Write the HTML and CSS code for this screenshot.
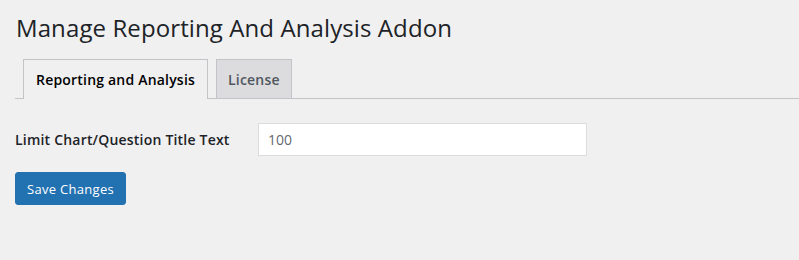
FILE: index.html
```html
<html>
<head>
<link rel="stylesheet" href="styles.css">
</head>
<body>
<div class="wrap">
  <h1 class="page-title">Manage Reporting And Analysis Addon</h1>
  <nav class="nav-tab-wrapper">
    <a class="nav-tab nav-tab-active" href="#">Reporting and Analysis</a>
    <a class="nav-tab" href="#">License</a>
  </nav>
  <form class="settings">
    <div class="form-row">
      <label class="field-label" for="limit-title">Limit Chart/Question Title Text</label>
      <input class="regular-text" id="limit-title" type="text" value="100">
    </div>
    <button class="button-primary" type="button">Save Changes</button>
  </form>
</div>
</body>
</html>
```

FILE: styles.css
```css
* {
  box-sizing: border-box;
  margin: 0;
  padding: 0;
}

body {
  background: #f0f0f1;
  color: #1d2327;
  font-family: "Open Sans", "Noto Sans", sans-serif;
  font-size: 13px;
}

.wrap {
  padding: 0 0 0 15px;
}

.page-title {
  font-size: 24px;
  font-weight: 400;
  line-height: 30px;
  letter-spacing: 0.1px;
  padding: 13px 0 0 1px;
  color: #1d2327;
}

.nav-tab-wrapper {
  display: flex;
  gap: 8px;
  margin-top: 16px;
  padding-left: 8px;
  border-bottom: 1px solid #c3c4c7;
}

.nav-tab {
  display: block;
  height: 39px;
  padding: 0 12px;
  line-height: 40px;
  font-size: 14px;
  font-weight: 600;
  letter-spacing: 0.2px;
  color: #50575e;
  text-decoration: none;
  background: #dcdcde;
  border: 1px solid #c3c4c7;
  border-bottom: none;
  margin-bottom: -1px;
}

.nav-tab + .nav-tab {
  padding: 0 11px;
}

.nav-tab-active {
  background: #f0f0f1;
  color: #000;
  height: 40px;
}

.settings {
  padding-top: 24px;
}

.form-row {
  display: grid;
  grid-template-columns: 243px 329px;
  align-items: center;
}

.field-label {
  font-size: 14px;
  font-weight: 600;
  letter-spacing: 0.2px;
  color: #1d2327;
}

.regular-text {
  height: 33px;
  padding: 0 9px;
  font-family: inherit;
  font-size: 14px;
  color: #646970;
  background: #fff;
  border: 1px solid #dcdcde;
  outline: none;
}

.button-primary {
  margin-top: 16px;
  height: 33px;
  padding: 0 11px;
  font-family: inherit;
  font-size: 13px;
  letter-spacing: 0.3px;
  color: #fff;
  background: #2271b1;
  border: 1px solid #2271b1;
  border-radius: 3px;
}
```
